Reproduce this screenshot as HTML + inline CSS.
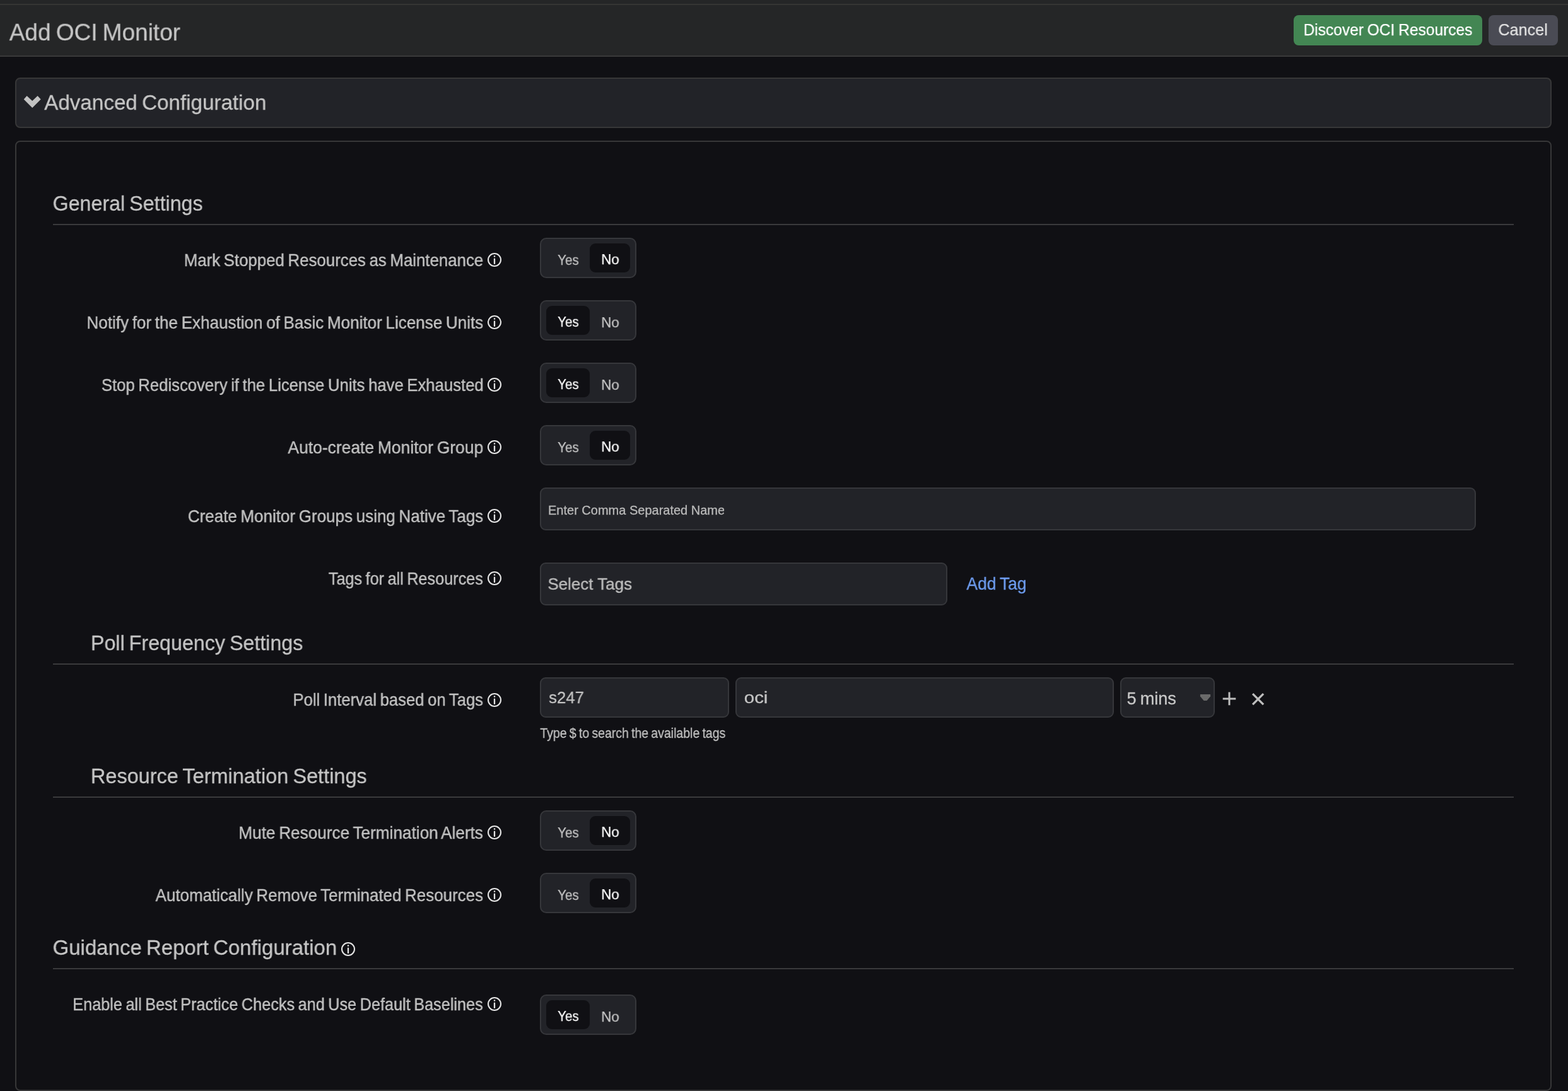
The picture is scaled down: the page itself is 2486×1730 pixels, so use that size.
<!DOCTYPE html>
<html lang="en">
<head>
<meta charset="utf-8">
<title>Add OCI Monitor</title>
<style>
html,body{margin:0;padding:0}
h1,h2{margin:0;font-weight:400}
body{width:2486px;height:1730px;overflow:hidden;position:relative;background:#101014;
 font-family:"Liberation Sans",sans-serif}
.a,.t,.tg,.rule,.box{position:absolute}
.t{white-space:pre;display:block;transform-origin:0 50%;will-change:transform}
.hdr{position:absolute;left:0;top:0;width:2486px;height:88px;background:#252627;border-bottom:2px solid #3a3a3a}
.topline{position:absolute;left:0;top:6px;width:2486px;height:2px;background:#353534}
.btn{position:absolute;top:24px;height:48px;border-radius:8px}
.acc{position:absolute;left:24px;top:123px;width:2432px;height:76px;border:2px solid #373738;border-radius:8px;background:#222328}
.panel{position:absolute;left:24px;top:223px;width:2432px;height:1503px;border:2px solid #373738;border-radius:8px}
.rule{left:84px;width:2316px;height:2px;background:#3a3a3c}
.box{background:#222328;border:2px solid #36373b;border-radius:9px;box-sizing:border-box}
.tg{left:856px;width:153px;height:64px;box-sizing:border-box;background:#222328;border:2px solid #36373b;border-radius:10px}
.tg i{position:absolute;top:7px;height:46px;border-radius:9px;background:#101014}
.tg i.y{left:8px;width:69px}
.tg i.n{left:77px;width:64px}
</style>
</head>
<body>

<div class="hdr"></div><div class="topline"></div>
<h1 class="t" style="left:14px;top:28px;font-size:38px;line-height:46px;color:#c6c6c6;word-spacing:-2.28px;-webkit-text-stroke:0.25px #c6c6c6;transform-origin:0 36px;transform:translate(0.74px,0.00px) scale(0.9742,0.975);">Add OCI Monitor</h1>
<div class="btn" style="left:2051px;width:299px;background:#438653"></div>
<span class="t" style="left:2066px;top:30px;font-size:26px;line-height:34px;color:#ffffff;word-spacing:-1.04px;-webkit-text-stroke:0.25px #ffffff;transform:translate(0.56px,0.00px) scaleX(0.9431);">Discover OCI Resources</span>
<div class="btn" style="left:2360px;width:110px;background:#4a4b54"></div>
<span class="t" style="left:2375px;top:30px;font-size:26px;line-height:34px;color:#e2e2e2;word-spacing:-1.56px;-webkit-text-stroke:0.25px #e2e2e2;transform:translate(0.39px,0.00px) scaleX(0.9672);">Cancel</span>
<div class="acc"></div>
<svg class="a" style="left:30px;top:145px" width="40" height="32" viewBox="30 145 40 32"><polygon points="37.7,157.5 42.6,152.1 51.2,160.1 59.6,152.1 64.7,157.5 51.2,171" fill="#c2c2c2"/></svg>
<h2 class="t" style="left:70px;top:141px;font-size:34px;line-height:42px;color:#c6c6c6;word-spacing:-2.04px;-webkit-text-stroke:0.3px #c6c6c6;transform:translate(0.15px,0.00px) scaleX(0.9761);">Advanced Configuration</h2>
<div class="panel"></div>
<h2 class="t" style="left:83px;top:301px;font-size:34px;line-height:42px;color:#c6c6c6;word-spacing:-2.04px;-webkit-text-stroke:0.3px #c6c6c6;transform:translate(0.57px,0.00px) scaleX(0.9473);">General Settings</h2>
<div class="rule" style="top:355px"></div>
<label class="t" style="left:291px;top:395px;font-size:27.3px;line-height:35px;color:#c2c2c2;word-spacing:-1.64px;-webkit-text-stroke:0.4px #c2c2c2;transform:translate(0.70px,0.00px) scaleX(0.9457);">Mark Stopped Resources as Maintenance</label>
<svg class="a" style="left:771.70px;top:400.46px" width="24" height="24" viewBox="0 0 24 24"><circle cx="12" cy="12" r="10" fill="none" stroke="#e4e4e4" stroke-width="2.05"/><circle cx="12" cy="6.55" r="1.25" fill="#e4e4e4"/><path d="M12 10.7V17.9" stroke="#e4e4e4" stroke-width="2.3" stroke-linecap="round" fill="none"/></svg>
<div class="tg" style="top:377px"><i class="n"></i></div>
<span class="t" style="left:884px;top:397px;font-size:23px;line-height:30px;color:#c6c6c6;word-spacing:-1.38px;-webkit-text-stroke:0.25px #c6c6c6;transform-origin:0 23px;transform:translate(0.16px,0.00px) scale(0.8947,0.945);">Yes</span>
<span class="t" style="left:953px;top:396px;font-size:23px;line-height:30px;color:#ffffff;word-spacing:-1.38px;-webkit-text-stroke:0.25px #ffffff;transform-origin:0 23px;transform:translate(0.32px,0.00px) scale(0.9676,0.945);">No</span>
<label class="t" style="left:137px;top:494px;font-size:27.3px;line-height:35px;color:#c2c2c2;word-spacing:-1.64px;-webkit-text-stroke:0.4px #c2c2c2;transform:translate(0.38px,0.00px) scaleX(0.9543);">Notify for the Exhaustion of Basic Monitor License Units</label>
<svg class="a" style="left:771.70px;top:499.46px" width="24" height="24" viewBox="0 0 24 24"><circle cx="12" cy="12" r="10" fill="none" stroke="#e4e4e4" stroke-width="2.05"/><circle cx="12" cy="6.55" r="1.25" fill="#e4e4e4"/><path d="M12 10.7V17.9" stroke="#e4e4e4" stroke-width="2.3" stroke-linecap="round" fill="none"/></svg>
<div class="tg" style="top:476px"><i class="y"></i></div>
<span class="t" style="left:884px;top:495px;font-size:23px;line-height:30px;color:#ffffff;word-spacing:-1.38px;-webkit-text-stroke:0.25px #ffffff;transform-origin:0 23px;transform:translate(0.20px,0.00px) scale(0.8925,0.945);">Yes</span>
<span class="t" style="left:953px;top:496px;font-size:23px;line-height:30px;color:#c6c6c6;word-spacing:-1.38px;-webkit-text-stroke:0.25px #c6c6c6;transform-origin:0 23px;transform:translate(0.27px,0.00px) scale(0.9704,0.945);">No</span>
<label class="t" style="left:160px;top:593px;font-size:27.3px;line-height:35px;color:#c2c2c2;word-spacing:-1.64px;-webkit-text-stroke:0.4px #c2c2c2;transform:translate(0.85px,0.00px) scaleX(0.9407);">Stop Rediscovery if the License Units have Exhausted</label>
<svg class="a" style="left:771.70px;top:598.46px" width="24" height="24" viewBox="0 0 24 24"><circle cx="12" cy="12" r="10" fill="none" stroke="#e4e4e4" stroke-width="2.05"/><circle cx="12" cy="6.55" r="1.25" fill="#e4e4e4"/><path d="M12 10.7V17.9" stroke="#e4e4e4" stroke-width="2.3" stroke-linecap="round" fill="none"/></svg>
<div class="tg" style="top:575px"><i class="y"></i></div>
<span class="t" style="left:884px;top:594px;font-size:23px;line-height:30px;color:#ffffff;word-spacing:-1.38px;-webkit-text-stroke:0.25px #ffffff;transform-origin:0 23px;transform:translate(0.20px,0.00px) scale(0.8925,0.945);">Yes</span>
<span class="t" style="left:953px;top:595px;font-size:23px;line-height:30px;color:#c6c6c6;word-spacing:-1.38px;-webkit-text-stroke:0.25px #c6c6c6;transform-origin:0 23px;transform:translate(0.27px,0.00px) scale(0.9704,0.945);">No</span>
<label class="t" style="left:456px;top:692px;font-size:27.3px;line-height:35px;color:#c2c2c2;word-spacing:-1.64px;-webkit-text-stroke:0.4px #c2c2c2;transform:translate(0.40px,0.00px) scaleX(0.9685);">Auto-create Monitor Group</label>
<svg class="a" style="left:771.70px;top:697.46px" width="24" height="24" viewBox="0 0 24 24"><circle cx="12" cy="12" r="10" fill="none" stroke="#e4e4e4" stroke-width="2.05"/><circle cx="12" cy="6.55" r="1.25" fill="#e4e4e4"/><path d="M12 10.7V17.9" stroke="#e4e4e4" stroke-width="2.3" stroke-linecap="round" fill="none"/></svg>
<div class="tg" style="top:674px"><i class="n"></i></div>
<span class="t" style="left:884px;top:694px;font-size:23px;line-height:30px;color:#c6c6c6;word-spacing:-1.38px;-webkit-text-stroke:0.25px #c6c6c6;transform-origin:0 23px;transform:translate(0.16px,0.00px) scale(0.8947,0.945);">Yes</span>
<span class="t" style="left:953px;top:693px;font-size:23px;line-height:30px;color:#ffffff;word-spacing:-1.38px;-webkit-text-stroke:0.25px #ffffff;transform-origin:0 23px;transform:translate(0.32px,0.00px) scale(0.9676,0.945);">No</span>
<label class="t" style="left:297px;top:801px;font-size:27.3px;line-height:35px;color:#c2c2c2;word-spacing:-1.64px;-webkit-text-stroke:0.4px #c2c2c2;transform:translate(0.79px,0.00px) scaleX(0.9521);">Create Monitor Groups using Native Tags</label>
<svg class="a" style="left:771.70px;top:806.20px" width="24" height="24" viewBox="0 0 24 24"><circle cx="12" cy="12" r="10" fill="none" stroke="#e4e4e4" stroke-width="2.05"/><circle cx="12" cy="6.55" r="1.25" fill="#e4e4e4"/><path d="M12 10.7V17.9" stroke="#e4e4e4" stroke-width="2.3" stroke-linecap="round" fill="none"/></svg>
<div class="box" style="left:856px;top:773px;width:1484px;height:68px"></div>
<span class="t" style="left:869px;top:796px;font-size:20px;line-height:26px;color:#bababa;-webkit-text-stroke:0.3px #bababa;width:279.2px;overflow:hidden;">Enter Comma Separated Name</span>
<label class="t" style="left:520px;top:900px;font-size:27.3px;line-height:35px;color:#c2c2c2;word-spacing:-1.64px;-webkit-text-stroke:0.4px #c2c2c2;transform:translate(0.80px,0.00px) scaleX(0.9243);">Tags for all Resources</label>
<svg class="a" style="left:771.70px;top:905.35px" width="24" height="24" viewBox="0 0 24 24"><circle cx="12" cy="12" r="10" fill="none" stroke="#e4e4e4" stroke-width="2.05"/><circle cx="12" cy="6.55" r="1.25" fill="#e4e4e4"/><path d="M12 10.7V17.9" stroke="#e4e4e4" stroke-width="2.3" stroke-linecap="round" fill="none"/></svg>
<div class="box" style="left:856px;top:892px;width:646px;height:68px"></div>
<span class="t" style="left:868px;top:909px;font-size:26px;line-height:34px;color:#bcbcbc;-webkit-text-stroke:0.4px #bcbcbc;transform:translate(0.38px,0.00px) scaleX(0.9978);">Select Tags</span>
<span class="t" style="left:1532px;top:908px;font-size:28px;line-height:35px;color:#6e9df0;word-spacing:-1.68px;-webkit-text-stroke:0.3px #6e9df0;transform:translate(0.32px,0.00px) scaleX(0.9456);">Add Tag</span>
<h2 class="t" style="left:143px;top:998px;font-size:34px;line-height:42px;color:#c6c6c6;word-spacing:-2.04px;-webkit-text-stroke:0.3px #c6c6c6;transform:translate(0.91px,0.00px) scaleX(0.9478);">Poll Frequency Settings</h2>
<div class="rule" style="top:1052px"></div>
<label class="t" style="left:464px;top:1092px;font-size:27.3px;line-height:35px;color:#c2c2c2;word-spacing:-1.64px;-webkit-text-stroke:0.4px #c2c2c2;transform:translate(0.41px,0.00px) scaleX(0.9405);">Poll Interval based on Tags</label>
<svg class="a" style="left:771.70px;top:1097.50px" width="24" height="24" viewBox="0 0 24 24"><circle cx="12" cy="12" r="10" fill="none" stroke="#e4e4e4" stroke-width="2.05"/><circle cx="12" cy="6.55" r="1.25" fill="#e4e4e4"/><path d="M12 10.7V17.9" stroke="#e4e4e4" stroke-width="2.3" stroke-linecap="round" fill="none"/></svg>
<div class="box" style="left:856px;top:1074px;width:300px;height:64px"></div>
<span class="t" style="left:870px;top:1089px;font-size:26px;line-height:34px;color:#c4c4c4;-webkit-text-stroke:0.3px #c4c4c4;transform:translate(0.14px,0.00px) scaleX(0.9868);">s247</span>
<div class="box" style="left:1166px;top:1074px;width:600px;height:64px"></div>
<span class="t" style="left:1179px;top:1089px;font-size:26px;line-height:34px;color:#c4c4c4;-webkit-text-stroke:0.3px #c4c4c4;transform:translate(0.82px,0.00px) scaleX(1.1299);">oci</span>
<div class="box" style="left:1776px;top:1074px;width:150px;height:64px"></div>
<span class="t" style="left:1786px;top:1091px;font-size:27px;line-height:34px;color:#c8c8c8;word-spacing:-1.35px;-webkit-text-stroke:0.3px #c8c8c8;transform:translate(0.39px,0.00px) scaleX(1.0046);">5 mins</span>
<svg class="a" style="left:1900px;top:1098px" width="24" height="16" viewBox="1900 1098 24 16"><path d="M1902.9 1101H1919.1V1104.2L1913.4 1110.9H1908.6L1902.9 1104.2Z" fill="#6a6a6a"/></svg>
<svg class="a" style="left:1934px;top:1094px" width="76" height="28" viewBox="1934 1094 76 28"><path d="M1949 1097.6V1118.2M1938.7 1107.9H1959.3" stroke="#bebebe" stroke-width="3" fill="none"/><path d="M1986.1 1100.1L2003.1 1117.1M2003.1 1100.1L1986.1 1117.1" stroke="#bebebe" stroke-width="3.3" fill="none"/></svg>
<span class="t" style="left:856px;top:1148px;font-size:22px;line-height:29px;color:#c2c2c2;word-spacing:-1.32px;-webkit-text-stroke:0.3px #c2c2c2;transform:translate(0.30px,0.00px) scaleX(0.8855);">Type $ to search the available tags</span>
<h2 class="t" style="left:143px;top:1209px;font-size:34px;line-height:42px;color:#c6c6c6;word-spacing:-2.04px;-webkit-text-stroke:0.3px #c6c6c6;transform:translate(0.86px,0.00px) scaleX(0.9553);">Resource Termination Settings</h2>
<div class="rule" style="top:1263px"></div>
<label class="t" style="left:378px;top:1303px;font-size:27.3px;line-height:35px;color:#c2c2c2;word-spacing:-1.64px;-webkit-text-stroke:0.4px #c2c2c2;transform:translate(0.28px,0.00px) scaleX(0.9589);">Mute Resource Termination Alerts</label>
<svg class="a" style="left:771.70px;top:1308.35px" width="24" height="24" viewBox="0 0 24 24"><circle cx="12" cy="12" r="10" fill="none" stroke="#e4e4e4" stroke-width="2.05"/><circle cx="12" cy="6.55" r="1.25" fill="#e4e4e4"/><path d="M12 10.7V17.9" stroke="#e4e4e4" stroke-width="2.3" stroke-linecap="round" fill="none"/></svg>
<div class="tg" style="top:1285px"><i class="n"></i></div>
<span class="t" style="left:884px;top:1305px;font-size:23px;line-height:30px;color:#c6c6c6;word-spacing:-1.38px;-webkit-text-stroke:0.25px #c6c6c6;transform-origin:0 23px;transform:translate(0.16px,0.00px) scale(0.8947,0.945);">Yes</span>
<span class="t" style="left:953px;top:1304px;font-size:23px;line-height:30px;color:#ffffff;word-spacing:-1.38px;-webkit-text-stroke:0.25px #ffffff;transform-origin:0 23px;transform:translate(0.32px,0.00px) scale(0.9676,0.945);">No</span>
<label class="t" style="left:246px;top:1402px;font-size:27.3px;line-height:35px;color:#c2c2c2;word-spacing:-1.64px;-webkit-text-stroke:0.4px #c2c2c2;transform:translate(0.55px,0.00px) scaleX(0.9500);">Automatically Remove Terminated Resources</label>
<svg class="a" style="left:771.70px;top:1407.45px" width="24" height="24" viewBox="0 0 24 24"><circle cx="12" cy="12" r="10" fill="none" stroke="#e4e4e4" stroke-width="2.05"/><circle cx="12" cy="6.55" r="1.25" fill="#e4e4e4"/><path d="M12 10.7V17.9" stroke="#e4e4e4" stroke-width="2.3" stroke-linecap="round" fill="none"/></svg>
<div class="tg" style="top:1384px"><i class="n"></i></div>
<span class="t" style="left:884px;top:1404px;font-size:23px;line-height:30px;color:#c6c6c6;word-spacing:-1.38px;-webkit-text-stroke:0.25px #c6c6c6;transform-origin:0 23px;transform:translate(0.16px,0.00px) scale(0.8947,0.945);">Yes</span>
<span class="t" style="left:953px;top:1403px;font-size:23px;line-height:30px;color:#ffffff;word-spacing:-1.38px;-webkit-text-stroke:0.25px #ffffff;transform-origin:0 23px;transform:translate(0.32px,0.00px) scale(0.9676,0.945);">No</span>
<h2 class="t" style="left:83px;top:1481px;font-size:34px;line-height:42px;color:#c6c6c6;word-spacing:-2.04px;-webkit-text-stroke:0.3px #c6c6c6;transform:translate(0.55px,0.00px) scaleX(0.9698);">Guidance Report Configuration</h2>
<svg class="a" style="left:540.40px;top:1492.80px" width="24" height="24" viewBox="0 0 24 24"><circle cx="12" cy="12" r="10" fill="none" stroke="#e4e4e4" stroke-width="2.05"/><circle cx="12" cy="6.55" r="1.25" fill="#e4e4e4"/><path d="M12 10.7V17.9" stroke="#e4e4e4" stroke-width="2.3" stroke-linecap="round" fill="none"/></svg>
<div class="rule" style="top:1535px"></div>
<label class="t" style="left:115px;top:1575px;font-size:27.3px;line-height:35px;color:#c2c2c2;word-spacing:-1.64px;-webkit-text-stroke:0.4px #c2c2c2;transform:translate(0.22px,0.00px) scaleX(0.9252);">Enable all Best Practice Checks and Use Default Baselines</label>
<svg class="a" style="left:771.70px;top:1580.25px" width="24" height="24" viewBox="0 0 24 24"><circle cx="12" cy="12" r="10" fill="none" stroke="#e4e4e4" stroke-width="2.05"/><circle cx="12" cy="6.55" r="1.25" fill="#e4e4e4"/><path d="M12 10.7V17.9" stroke="#e4e4e4" stroke-width="2.3" stroke-linecap="round" fill="none"/></svg>
<div class="tg" style="top:1577px"><i class="y"></i></div>
<span class="t" style="left:884px;top:1596px;font-size:23px;line-height:30px;color:#ffffff;word-spacing:-1.38px;-webkit-text-stroke:0.25px #ffffff;transform-origin:0 23px;transform:translate(0.20px,0.00px) scale(0.8925,0.945);">Yes</span>
<span class="t" style="left:953px;top:1597px;font-size:23px;line-height:30px;color:#c6c6c6;word-spacing:-1.38px;-webkit-text-stroke:0.25px #c6c6c6;transform-origin:0 23px;transform:translate(0.27px,0.00px) scale(0.9704,0.945);">No</span>
</body>
</html>
